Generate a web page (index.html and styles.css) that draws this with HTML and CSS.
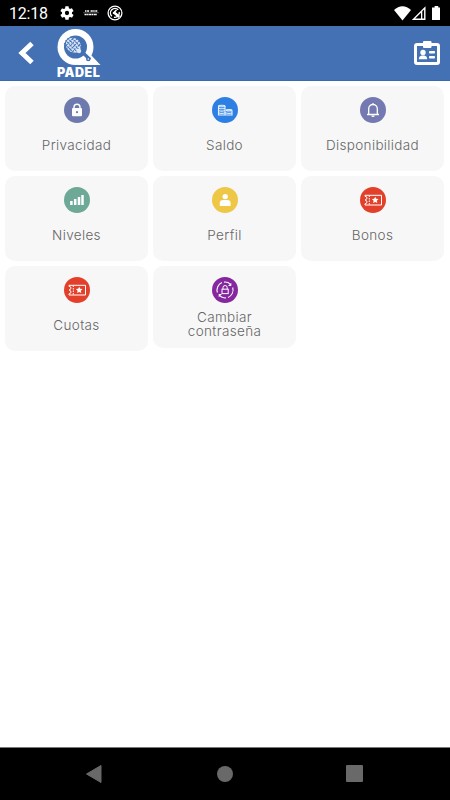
FILE: index.html
```html
<!DOCTYPE html>
<html lang="es">
<head>
<meta charset="utf-8">
<title>Padel</title>
<link rel="stylesheet" href="styles.css">
</head>
<body>
<div class="status">
  <span class="clock">12:18</span>
  <svg class="gear" viewBox="0 0 24 24"><path fill="#fff" fill-rule="evenodd" d="M19.4 13c.04-.3.06-.65.06-1s-.02-.7-.07-1l2.1-1.65a.5.5 0 0 0 .12-.64l-2-3.46a.5.5 0 0 0-.6-.22l-2.5 1a7.300 7.300 0 0 0-1.700-1l-.38-2.600A.5.5 0 0 0 14 2h-4a.5.5 0 0 0-.5.430L9.100 5.080a7.700 7.700 0 0 0-1.700 1l-2.480-1a.5.5 0 0 0-.600.220l-2 3.460a.5.5 0 0 0 .12.640L4.570 11a7 7 0 0 0 0 2l-2.120 1.650a.5.5 0 0 0-.12.640l2 3.460c.12.220.38.300.600.220l2.500-1a7.300 7.300 0 0 0 1.700 1l.37 2.600c.05.240.25.430.5.430h4c.25 0 .46-.18.5-.42l.37-2.650a7.700 7.700 0 0 0 1.700-1l2.500 1c.22.080.48 0 .6-.22l2-3.460a.5.5 0 0 0-.12-.640zM12 15.200a3.200 3.200 0 1 1 0-6.400 3.200 3.200 0 0 1 0 6.400z"/></svg>
  <svg class="mini" viewBox="0 0 16 8"><g fill="none" stroke="#fff"><path stroke-width="1.300" stroke-dasharray="1.500 .6 2 1.500 2.200 .4" d="M2 2H15"/><path stroke-width="1.300" stroke-dasharray="2.200 .4 1.500 .5" d="M1.500 5.500H14"/><path stroke-width=".5" opacity=".6" d="M0 3.700H16"/></g></svg>
  <svg class="round" viewBox="0 0 16 16"><g fill="none" stroke="#fff"><circle cx="8" cy="8" r="6.900" stroke-width="1.300"/><path stroke-width="1.400" d="M4.800 11.200A4.400 4.400 0 0 1 11.200 4.800M12.200 7A4.300 4.300 0 0 1 7 12.200"/><path stroke-width="2.600" d="M6.800 7.200L12.300 12"/><path stroke-width="1.600" d="M6 8.500L9.500 5"/></g></svg>
  <svg class="signals" viewBox="0 0 50 18"><g fill="#fff"><path d="M1 5C6-.1 13-.1 18 5L9.500 15.500z"/><path fill-rule="evenodd" d="M32.500 1.300V15H18.800zM28 7.700L22.200 13.600H28zM29.300 6.300V13.600H31.100V4.500z"/><path d="M40 2.500H41.600V1H45.300V2.500H47V15H39V2.500z"/></g></svg>
</div>
<header class="bar">
  <svg class="back" viewBox="0 0 18 24"><path d="M15 2.500L5 12L15 21.500" fill="none" stroke="#fff" stroke-width="5"/></svg>
  <div class="logo">
    <svg viewBox="0 0 44 38"><circle cx="18.500" cy="18" r="18" fill="#fff"/><path fill="#fff" d="M20 36H43.500L33 25z"/><circle cx="18.500" cy="18" r="11.500" fill="#4371b3"/>
      <g transform="rotate(-45 17 17)"><ellipse cx="17" cy="16" rx="7" ry="8" fill="#dbe6f5"/><path d="M10 11H24M9 14H25M9 17H25M10 20H24M12 8V23M15 7V24M18 7V24M21 8V23" stroke="#4371b3" stroke-width="1" stroke-dasharray="1.600 .7"/></g>
      <path d="M24 22L33 30.500" fill="none" stroke="#4371b3" stroke-width="3.200"/><circle cx="22" cy="22" r="2.200" fill="#dce7f6"/><circle cx="31.300" cy="30" r="2.300" fill="#4371b3"/><circle cx="31.300" cy="30" r=".8" fill="#fff"/></svg>
    <span>PADEL</span>
  </div>
  <svg class="card-id" viewBox="0 0 26 24"><rect x="1.500" y="3.500" width="23" height="19" rx="1.500" fill="none" stroke="#fff" stroke-width="3"/><g fill="#fff"><rect x="9" y="0" width="8.500" height="7" rx="1"/><circle cx="9" cy="11.500" r="2.700"/><path d="M4.900 18.300v-1.300q.3-2 2.600-2.500h3q2.300.5 2.600 2.500v1.300z"/><rect x="15" y="10" width="6" height="2.500" rx=".8"/><rect x="15" y="15" width="6" height="2.500" rx=".8"/></g></svg>
</header>
<main class="grid">
  <a class="tile"><svg viewBox="0 0 26 26"><circle cx="13" cy="13" r="13" fill="#6e7aae"/><path d="M10 12V10.300a3 3 0 0 1 6 0V12" fill="none" stroke="#fff" stroke-width="1.400"/><rect x="8" y="11" width="10" height="8.200" rx="1" fill="#fff"/><circle cx="13" cy="15.200" r="1.100" fill="#6e7aae"/></svg><span>Privacidad</span></a>
  <a class="tile"><svg viewBox="0 0 26 26"><circle cx="13" cy="13" r="13" fill="#2d7fe3"/><g fill="none" stroke="#e7f2ff" stroke-width="1.100"><ellipse cx="9.700" cy="9" rx="3.200" ry=".8"/><path d="M6.500 9V18H20V13.500M13 9V18M6.500 11.200Q9.700 12.400 13 11.200M6.500 13.500Q9.700 14.700 13 13.500M6.500 15.800Q9.700 17 13 15.800M13.500 15.800Q17 17 20 15.800"/><ellipse cx="17" cy="13.200" rx="2.900" ry=".7"/></g></svg><span>Saldo</span></a>
  <a class="tile"><svg viewBox="0 0 26 26"><circle cx="13" cy="13" r="13" fill="#7479b1"/><path d="M7 17.500H19M8.700 17V11.800a4.300 4.300 0 0 1 8.600 0V17M13 7.500V6" fill="none" stroke="#fff" stroke-width="1.300"/><path d="M11.300 18.600h3.400a1.700 1.500 0 0 1-3.400 0z" fill="#fff"/></svg><span>Disponibilidad</span></a>
  <a class="tile"><svg viewBox="0 0 26 26"><circle cx="13" cy="13" r="13" fill="#6da996"/><path d="M7.400 18V14M11.200 18V12M15 18V10M18.500 18V8" stroke="#fff" stroke-width="2.500"/></svg><span>Niveles</span></a>
  <a class="tile"><svg viewBox="0 0 26 26"><circle cx="13" cy="13" r="13" fill="#efc746"/><circle cx="13.200" cy="9.600" r="2.700" fill="#fff"/><path d="M7.800 19v-2.800q0-3.300 3.200-3.300h4.400q3.200 0 3.200 3.300V19z" fill="#fff"/></svg><span>Perfil</span></a>
  <a class="tile"><svg viewBox="0 0 26 26"><circle cx="13" cy="13" r="13" fill="#e3402c"/><path d="M5 8.300H21.500V18H5V16.800Q7 16.500 7 15Q7 13.500 5 13Q7 12.500 7 11Q7 9.500 5 9.300z" fill="none" stroke="#fff"/><path d="M9.300 8.500V18" stroke="#fff" stroke-dasharray="1.500 1"/><path d="M15.200 9.700l1 2.100 2.300.3-1.700 1.600.5 2.300-2.100-1.100-2.100 1.100.5-2.300-1.700-1.600 2.300-.3z" fill="#fff"/></svg><span>Bonos</span></a>
  <a class="tile"><svg viewBox="0 0 26 26"><circle cx="13" cy="13" r="13" fill="#e3402c"/><path d="M5 8.300H21.500V18H5V16.800Q7 16.500 7 15Q7 13.500 5 13Q7 12.500 7 11Q7 9.500 5 9.300z" fill="none" stroke="#fff"/><path d="M9.300 8.500V18" stroke="#fff" stroke-dasharray="1.500 1"/><path d="M15.200 9.700l1 2.100 2.300.3-1.700 1.600.5 2.300-2.100-1.100-2.100 1.100.5-2.300-1.700-1.600 2.300-.3z" fill="#fff"/></svg><span>Cuotas</span></a>
  <a class="tile double"><svg viewBox="0 0 26 26"><circle cx="13" cy="13" r="13" fill="#85289f"/><g fill="none" stroke="#fff"><path d="M5.400 15.500A8 8 0 0 1 10 5.600M12 5.100A8 8 0 0 1 18.500 7.300M20.700 10.500A8 8 0 0 1 16 20.400M14 20.900A8 8 0 0 1 7.500 18.700" stroke-width="1.100"/><path d="M11 12V10.600a2.100 2.100 0 0 1 4.200 0V12"/><rect x="10" y="12.200" width="6.200" height="4.400"/></g><path d="M19.300 5.800v3.300h-3.300zM6.700 20.200v-3.300h3.300z" fill="#fff"/></svg><span>Cambiar<br>contraseña</span></a>
</main>
<nav class="nav">
  <svg viewBox="0 0 18 20"><path d="M16 1.500V18.500L1.500 10z" fill="#696969" stroke="#696969" stroke-linejoin="round"/></svg>
  <i class="dot"></i>
  <i class="square"></i>
</nav>
</body>
</html>
```
FILE: styles.css
```css
* { box-sizing: border-box; }
body { margin: 0; height: 800px; display: flex; flex-direction: column; background: #fff; font-family: Inter, sans-serif; overflow: hidden; }
svg { display: block; flex: none; }
.status { height: 26px; flex: none; display: flex; align-items: center; background: #000; color: #fff; padding-left: 9px; }
.clock { width: 50px; font: 400 16px/26px Roboto, sans-serif; padding-top: 1px; letter-spacing: -.2px; }
.gear { width: 16px; height: 16px; }
.mini { width: 16px; height: 8px; margin-left: 8px; }
.round { width: 16px; height: 16px; margin-left: 8px; }
.signals { width: 50px; height: 18px; margin: 1px 7px 0 auto; }
.bar { height: 55px; flex: none; display: flex; background: #4371b3; border-bottom: 1px solid #3c69ac; }
.back { width: 18px; height: 24px; margin: 15px 0 0 17px; }
.logo { width: 44px; margin: 3px 0 0 22px; color: #fff; }
.logo svg { width: 44px; height: 38px; }
.logo span { display: block; font-size: 12.500px; line-height: 12px; font-weight: 900; letter-spacing: .5px; }
.card-id { width: 26px; height: 24px; margin: 15px 10px 0 auto; }
.grid { flex: 1; display: grid; grid-template-columns: repeat(3, 143px); grid-auto-rows: 85px; gap: 5px; align-content: start; align-items: start; padding: 5px 0 0 5px; }
.tile { height: 85px; display: flex; flex-direction: column; align-items: center; background: #f7f7f7; border-radius: 10px; padding-top: 11px; color: #666; font-size: 13.500px; line-height: 14px; letter-spacing: .35px; white-space: nowrap; text-align: center; font-weight: 300; }
.tile svg { width: 26px; height: 26px; margin-bottom: 15px; }
.tile.double { height: 82px; }
.double svg { margin-bottom: 8px; }
.double span { line-height: 13.500px; }
.nav { height: 53px; flex: none; display: flex; justify-content: space-between; align-items: center; background: #000; border-top: 1px solid #777; padding: 0 87px 1px 85px; }
.nav svg { width: 18px; height: 20px; }
.dot { width: 16px; height: 16px; border-radius: 50%; background: #696969; }
.square { width: 17px; height: 17px; border-radius: 1px; background: #696969; }
```
